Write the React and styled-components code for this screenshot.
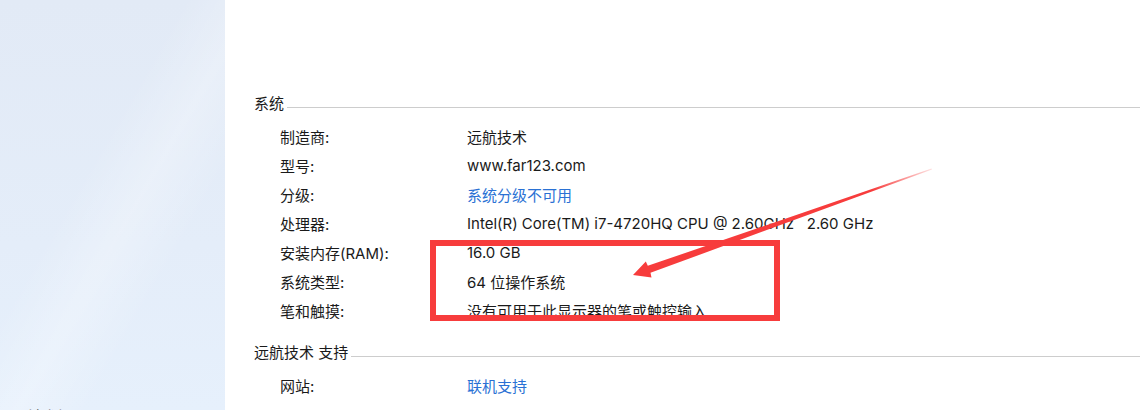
import React from 'react';
import styled, { createGlobalStyle } from 'styled-components';

const GlobalStyle = createGlobalStyle`
    html, body {
        margin: 0;
        padding: 0;
        background: #fff;
    }
    #root {
        width: 1140px;
        height: 410px;
        overflow: hidden;
    }
`;

const Page = styled.div`
    position: relative;
    display: flex;
    width: 1140px;
    height: 410px;
    font-family: Inter, "Noto Sans CJK SC", sans-serif;
    font-size: 15px;
    color: #1a1a1a;
`;

const Sidebar = styled.div`
    width: 225px;
    flex-shrink: 0;
    display: flex;
    flex-direction: column;
    justify-content: flex-end;
    background:
        linear-gradient(120deg, rgba(255, 255, 255, 0) 40%, rgba(255, 255, 255, 0.25) 55%, rgba(255, 255, 255, 0) 70%),
        linear-gradient(180deg, #e2eaf6 0%, #e4edf9 60%, #e6f0fc 100%);
`;

const SeeAlso = styled.div`
    padding-left: 13px;
    line-height: 20px;
    margin-bottom: -17px;
    color: #6a6a6a;
`;

const Main = styled.div`
    flex: 1;
    padding-top: 94px;
    padding-left: 29px;
`;

const Section = styled.section`
    & + & {
        margin-top: 18px;
    }
`;

const Header = styled.div`
    display: flex;
    align-items: center;
    line-height: 20px;
`;

const HeaderLine = styled.div`
    flex: 1;
    height: 1px;
    margin-left: 3px;
    margin-top: 6px;
    background: #cdcdcd;
`;

const Rows = styled.div`
    margin-top: 8px;
    padding-left: 26px;
`;

const Row = styled.div`
    display: flex;
    align-items: center;
    height: 29px;
`;

const Label = styled.div`
    width: 187px;
    flex-shrink: 0;
`;

const Value = styled.div`
    white-space: pre;
    color: ${p => (p.$link ? '#2a71d4' : '#1a1a1a')};
`;

const HighlightBox = styled.div`
    position: absolute;
    left: 430px;
    top: 240px;
    width: 350px;
    height: 81px;
    box-sizing: border-box;
    border: 6px solid #f73c3c;
    pointer-events: none;
`;

const ArrowLayer = styled.svg`
    position: absolute;
    left: 0;
    top: 0;
    pointer-events: none;
`;

const systemRows = [
    { label: '制造商:', value: '远航技术' },
    { label: '型号:', value: 'www.far123.com' },
    { label: '分级:', value: '系统分级不可用', link: true },
    { label: '处理器:', value: 'Intel(R) Core(TM) i7-4720HQ CPU @ 2.60GHz   2.60 GHz' },
    { label: '安装内存(RAM):', value: '16.0 GB' },
    { label: '系统类型:', value: '64 位操作系统' },
    { label: '笔和触摸:', value: '没有可用于此显示器的笔或触控输入' },
];

const supportRows = [
    { label: '网站:', value: '联机支持', link: true },
];

const InfoSection = ({ title, rows }) => (
    <Section>
        <Header>
            <span>{title}</span>
            <HeaderLine />
        </Header>
        <Rows>
            {rows.map((row, index) => (
                <Row key={index}>
                    <Label>{row.label}</Label>
                    <Value $link={row.link}>{row.value}</Value>
                </Row>
            ))}
        </Rows>
    </Section>
);

const App = () => {
    return (
        <>
            <GlobalStyle />
            <Page>
                <Sidebar>
                    <SeeAlso>另请参阅</SeeAlso>
                </Sidebar>
                <Main>
                    <InfoSection title="系统" rows={systemRows} />
                    <InfoSection title="远航技术 支持" rows={supportRows} />
                </Main>
                <HighlightBox />
                <ArrowLayer width="1140" height="410" viewBox="0 0 1140 410">
                    <defs>
                        <linearGradient id="arrowFade" x1="633" y1="275" x2="932" y2="169" gradientUnits="userSpaceOnUse">
                            <stop offset="0" stopColor="#f73c3c" />
                            <stop offset="0.8" stopColor="#f73c3c" />
                            <stop offset="1" stopColor="#f73c3c" stopOpacity="0.15" />
                        </linearGradient>
                    </defs>
                    <polygon
                        fill="url(#arrowFade)"
                        points="633,275 651.5,277.5 650.5,272.8 932,169.4 931.5,168.6 647.8,265.8 645.8,261.5"
                    />
                </ArrowLayer>
            </Page>
        </>
    );
};

export default App;
